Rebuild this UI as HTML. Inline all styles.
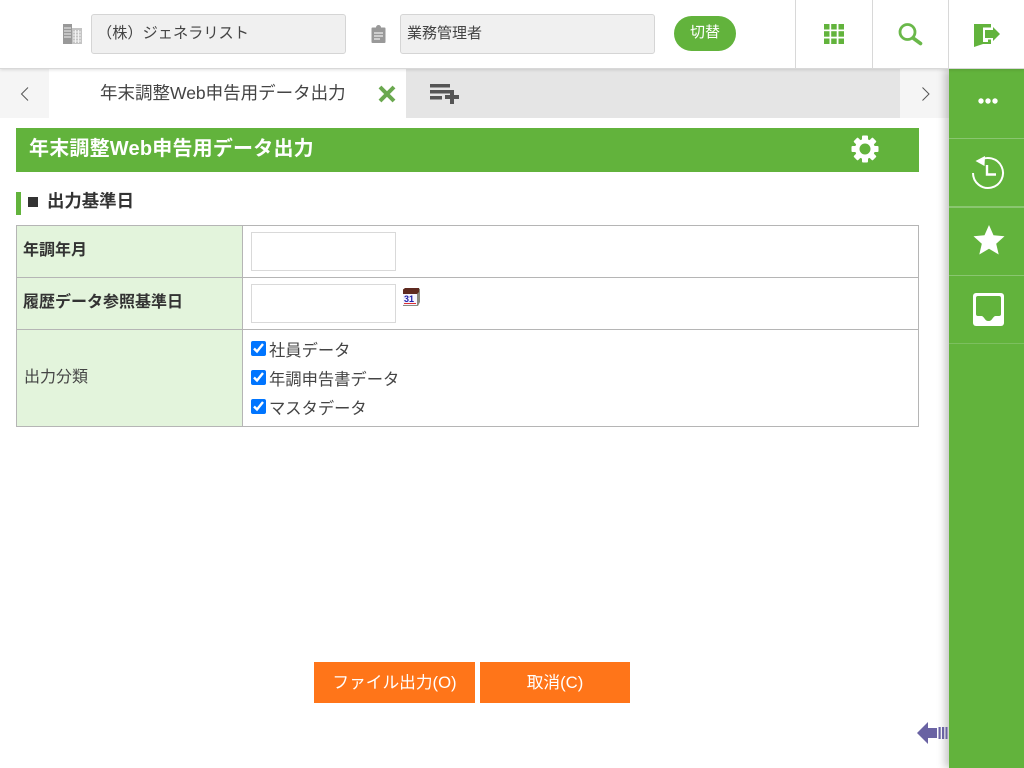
<!DOCTYPE html>
<html lang="ja"><head><meta charset="utf-8"><title>年末調整Web申告用データ出力</title>
<style>
html,body{margin:0;padding:0;width:1024px;height:768px;overflow:hidden;background:#fff}
body{position:relative;font-family:"Liberation Sans","Noto Sans CJK JP",sans-serif;color:#333;font-size:16px}
.a{position:absolute;box-sizing:border-box}
.t{position:absolute;white-space:nowrap;line-height:20px}
svg{position:absolute;display:block}
input[type=checkbox]{position:absolute;margin:0;width:15px;height:15px;accent-color:#0075ff}
</style></head><body>
<!-- header -->
<div class="a" style="left:0;top:0;width:1024px;height:69px;background:#fff;border-bottom:1px solid #d8d8d8;box-shadow:0 1px 3px rgba(0,0,0,.12);z-index:3"></div>
<div style="position:absolute;left:0;top:0;width:1024px;height:69px;z-index:4">
<svg style="left:63px;top:24px" width="19" height="20" viewBox="0 0 19 20"><rect x="0" y="0" width="9" height="20" fill="#999"/><rect x="9" y="4" width="10" height="16" fill="#c4c4c4"/><path d="M1 4h7M1 7h7M1 10h7M1 13h7" stroke="#eee" stroke-width="1"/><path d="M10 8h8M10 11h8M10 14h8M10 17h8M12.500 6v13M15.500 6v13" stroke="#f2f2f2" stroke-width="1"/></svg>
<div class="a" style="left:91px;top:14px;width:255px;height:40px;background:#f0f0f0;border:1px solid #d5d5d5;border-radius:3px"></div>
<div class="t" style="left:97px;top:22px;font-size:15.200px;line-height:21px;padding-top:1px;color:#444">（株）ジェネラリスト</div>
<svg style="left:371px;top:25px" width="15" height="18" viewBox="0 0 15 18"><path d="M1.500 2.500H5a2.500 2.500 0 0 1 5 0h3.500a1 1 0 0 1 1 1V17a1 1 0 0 1-1 1h-12a1 1 0 0 1-1-1V3.500a1 1 0 0 1 1-1z" fill="#999"/><path d="M3 8h9M3 11h9M3 14h6" stroke="#eee" stroke-width="1.300"/></svg>
<div class="a" style="left:400px;top:14px;width:255px;height:40px;background:#f0f0f0;border:1px solid #d5d5d5;border-radius:3px"></div>
<div class="t" style="left:407px;top:23px;font-size:15px;line-height:21px;color:#444">業務管理者</div>
<div class="a" style="left:674px;top:16px;width:62px;height:35px;background:#62b33c;border-radius:18px;color:#fff;font-size:15px;line-height:34px;text-align:center">切替</div>
<div class="a" style="left:795px;top:0;width:1px;height:68px;background:#d8d8d8"></div>
<div class="a" style="left:872px;top:0;width:1px;height:68px;background:#d8d8d8"></div>
<div class="a" style="left:948px;top:0;width:1px;height:68px;background:#d8d8d8"></div>
<svg style="left:824px;top:24px" width="20" height="20" viewBox="0 0 20 20" fill="#62b33c"><rect width="5.500" height="5.500"/><rect x="7.200" width="5.500" height="5.500"/><rect x="14.500" width="5.500" height="5.500"/><rect y="7.200" width="5.500" height="5.500"/><rect x="7.200" y="7.200" width="5.500" height="5.500"/><rect x="14.500" y="7.200" width="5.500" height="5.500"/><rect y="14.500" width="5.500" height="5.500"/><rect x="7.200" y="14.500" width="5.500" height="5.500"/><rect x="14.500" y="14.500" width="5.500" height="5.500"/></svg>
<svg style="left:898px;top:22px" width="25" height="24" viewBox="0 0 25 24" fill="none" stroke="#6ab84a"><circle cx="9.500" cy="10" r="7.500" stroke-width="2.800"/><path d="M15 16L22.500 21.500" stroke-width="3.600" stroke-linecap="round"/></svg>
<svg style="left:974px;top:24px" width="27" height="23" viewBox="0 0 27 23" fill="#62b33c"><path d="M0 0h17v3.500H9V20l-9 3z"/><path d="M11 6h8V3l7 7-7 7v-3h-8z"/><rect x="14" y="15.500" width="3" height="4.500"/><rect x="9" y="18" width="8" height="2"/></svg>
</div>
<!-- tab bar -->
<div class="a" style="left:0;top:69px;width:949px;height:49px;background:#e5e5e5"></div>
<div class="a" style="left:0;top:69px;width:49px;height:49px;background:#f5f5f5"></div>
<div class="a" style="left:49px;top:69px;width:357px;height:49px;background:#fff"></div>
<div class="a" style="left:900px;top:69px;width:49px;height:49px;background:#f5f5f5"></div>
<svg style="left:20px;top:86px" width="10" height="16" viewBox="0 0 10 16" fill="none" stroke="#555" stroke-width="1"><path d="M8 1.500L1.500 8 8 14.500"/></svg>
<svg style="left:921px;top:86px" width="10" height="16" viewBox="0 0 10 16" fill="none" stroke="#555" stroke-width="1"><path d="M1.500 1.500L8 8l-6.500 6.500"/></svg>
<div class="t" style="left:100px;top:83px;font-size:17.500px;line-height:21px;color:#444">年末調整Web申告用データ出力</div>
<svg style="left:378px;top:85px" width="18" height="18" viewBox="0 0 18 18" fill="none" stroke="#6aa84f" stroke-width="4"><path d="M2 2l14 14M16 2L2 16"/></svg>
<svg style="left:430px;top:84px" width="30" height="21" viewBox="0 0 30 21" fill="#555"><rect width="20" height="3.500" x="0" y="0"/><rect width="20" height="3.500" x="0" y="6"/><rect width="12" height="3.500" x="0" y="12"/><rect x="15" y="11" width="14" height="4"/><rect x="20" y="6" width="4" height="14"/></svg>
<!-- title -->
<div class="a" style="left:16px;top:128px;width:903px;height:44px;background:#62b33c"></div>
<div class="t" style="left:29px;top:139px;font-size:20px;letter-spacing:.2px;font-weight:bold;color:#fff">年末調整Web申告用データ出力</div>
<svg style="left:851px;top:135px" width="28" height="28" viewBox="0 0 28 28"><g fill="#fff"><circle cx="14" cy="14" r="10"/><rect x="11" y="0.500" width="6" height="27" rx="1"/><rect x="11" y="0.500" width="6" height="27" rx="1" transform="rotate(45 14 14)"/><rect x="11" y="0.500" width="6" height="27" rx="1" transform="rotate(90 14 14)"/><rect x="11" y="0.500" width="6" height="27" rx="1" transform="rotate(135 14 14)"/></g><circle cx="14" cy="14" r="5.500" fill="#62b33c"/></svg>
<!-- section -->
<div class="a" style="left:16px;top:192px;width:5px;height:23px;background:#62b33c"></div>
<div class="a" style="left:28px;top:197px;width:10px;height:10px;background:#333"></div>
<div class="t" style="left:47px;top:191px;font-size:17.400px;line-height:21px;font-weight:bold">出力基準日</div>
<!-- table -->
<div class="a" style="left:16px;top:225px;width:903px;height:202px;border:1px solid #b5b5b5"></div>
<div class="a" style="left:17px;top:226px;width:225px;height:200px;background:#e3f4dc"></div>
<div class="a" style="left:242px;top:226px;width:1px;height:200px;background:#b5b5b5"></div>
<div class="a" style="left:17px;top:277px;width:901px;height:1px;background:#b5b5b5"></div>
<div class="a" style="left:17px;top:329px;width:901px;height:1px;background:#b5b5b5"></div>
<div class="t" style="left:23px;top:241px;font-size:16px;font-weight:bold">年調年月</div>
<div class="t" style="left:23px;top:293px;font-size:16px;font-weight:bold">履歴データ参照基準日</div>
<div class="t" style="left:24px;top:368px;font-size:16px;color:#444">出力分類</div>
<div class="a" style="left:251px;top:232px;width:145px;height:39px;border:1px solid #d9d9d9;background:#fff"></div>
<div class="a" style="left:251px;top:284px;width:145px;height:39px;border:1px solid #d9d9d9;background:#fff"></div>
<svg style="left:402px;top:288px" width="18" height="19" viewBox="0 0 18 19"><path d="M2 1L17 0.500 18 1v13l-2 4H1V3z" fill="#8a8a80"/><path d="M1 1.500L3 0h14v4l-2 2H1z" fill="#5e2a20"/><rect x="1" y="6" width="14" height="11" fill="#f4f4ff"/><text x="2" y="14" font-size="9" font-weight="bold" fill="#2222aa" font-family="Liberation Sans">31</text><rect x="2" y="15" width="12" height="1" fill="#d33"/></svg>
<input type="checkbox" checked style="left:251px;top:341px">
<div class="t" style="left:269px;top:341px;font-size:16.300px;color:#444">社員データ</div>
<input type="checkbox" checked style="left:251px;top:370px">
<div class="t" style="left:269px;top:370px;font-size:16.300px;color:#444">年調申告書データ</div>
<input type="checkbox" checked style="left:251px;top:399px">
<div class="t" style="left:269px;top:399px;font-size:16.300px;color:#444">マスタデータ</div>
<!-- buttons -->
<div class="a" style="left:314px;top:662px;width:161px;height:41px;background:#ff7519;color:#fff;font-size:16.700px;line-height:41px;text-align:center">ファイル出力(O)</div>
<div class="a" style="left:480px;top:662px;width:150px;height:41px;background:#ff7519;color:#fff;font-size:16.700px;line-height:41px;text-align:center">取消(C)</div>
<!-- sidebar -->
<div class="a" style="left:949px;top:69px;width:75px;height:699px;background:#62b33c;box-shadow:-4px 0 8px rgba(0,0,0,.22);z-index:2"></div>
<div style="position:absolute;left:949px;top:69px;width:75px;height:699px;z-index:5">
<div class="a" style="left:0;top:69px;width:75px;height:1px;background:#8ac670"></div>
<div class="a" style="left:0;top:137px;width:75px;height:2px;background:#8ac670"></div>
<div class="a" style="left:0;top:206px;width:75px;height:1px;background:#8ac670"></div>
<div class="a" style="left:0;top:274px;width:75px;height:1px;background:#7cbf5f"></div>
<svg style="left:29px;top:29px" width="20" height="6" viewBox="0 0 20 6" fill="#fff"><circle cx="3" cy="3" r="2.700"/><circle cx="10" cy="3" r="2.700"/><circle cx="17" cy="3" r="2.700"/></svg>
<svg style="left:22px;top:86px" width="34" height="36" viewBox="0 0 34 36" fill="none" stroke="#fff"><path d="M8 6A15 15 0 1 1 2 18" stroke-width="2"/><path d="M4.500 6L14 1 13.500 11z" fill="#fff" stroke="none"/><path d="M16 10V19.500H25" stroke-width="2.400"/></svg>
<svg style="left:24px;top:155px" width="32" height="31" viewBox="0 0 32 31"><path d="M16 1l4.500 10.300 11 1-8.300 7.400 2.500 10.800L16 24.800 6.300 30.500l2.500-10.800L.5 12.300l11-1z" fill="#fff"/></svg>
<svg style="left:24px;top:224px" width="31" height="33" viewBox="0 0 31 33"><rect width="31" height="33" rx="3" fill="#fff"/><path d="M5 3h21a2 2 0 0 1 2 2v16a2 2 0 0 1-2 2h-3.500c-1 0-2 1-3 2.500-1 1.500-2 2.500-4 2.500s-3-1-4-2.500c-1-1.500-2-2.500-3-2.500H5a2 2 0 0 1-2-2V5a2 2 0 0 1 2-2z" fill="#62b33c"/></svg>
</div>
<!-- collapse arrow -->
<svg style="left:917px;top:720px;z-index:3" width="31" height="26" viewBox="0 0 31 26" fill="#6a63a3"><path d="M0 13L11 2v6h9v10h-9v6z"/><rect x="21.500" y="7" width="2.200" height="12"/><rect x="25" y="7" width="2.200" height="12"/><rect x="28.500" y="7" width="2" height="12"/></svg>
</body></html>
